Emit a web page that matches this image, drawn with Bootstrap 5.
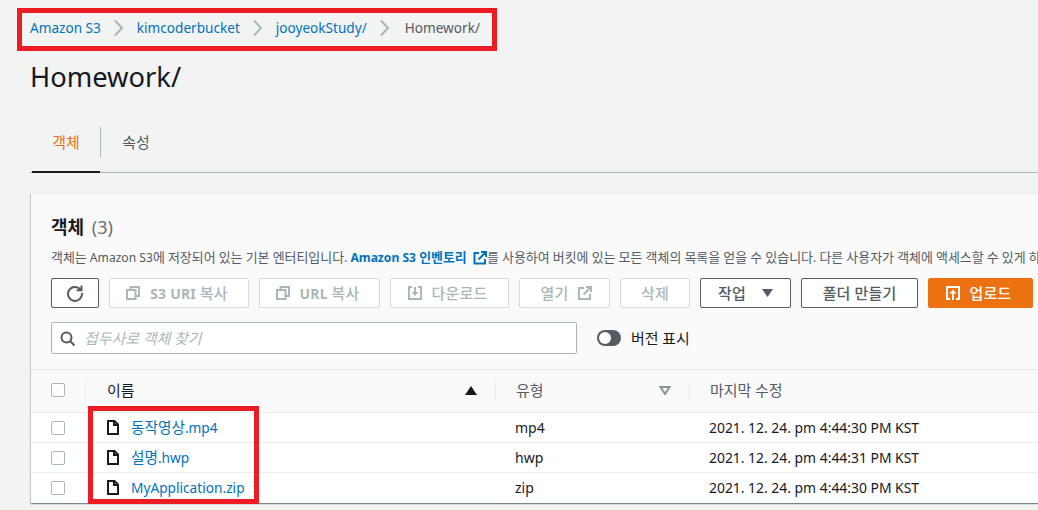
<!DOCTYPE html>
<html lang="ko">
<head>
  <meta charset="UTF-8" />
  <meta name="viewport" content="width=device-width, initial-scale=1" />
  <title>Homework/</title>
  <link href="https://cdn.jsdelivr.net/npm/bootstrap@5.3.0/dist/css/bootstrap.min.css" rel="stylesheet" />
  <style>
    html, body { height: 510px; overflow: hidden; }
    body {
      background: #f2f3f3;
      color: #16191f;
      font-family: "Noto Sans", "Noto Sans CJK KR", sans-serif;
      font-size: 14px;
      position: relative;
    }
    a { color: #0073bb; text-decoration: none; }
    .page-wrap { width: 1120px; padding: 0 0 0 30px; }
    /* hangul sits a bit larger than the latin text in this screen */
    .ko-run { font-size: 1.07em; }

    .crumb-bar { height: 55px; padding-top: 18px; line-height: 20px; font-size: 13.6px; gap: 12px; }
    .crumb-bar .crumb-now { color: #545b64; margin-left: 2px; }
    .crumb-sep { width: 12px; height: 16px; margin-top: 2px; }

    .page-title { font-size: 27.3px; font-weight: 400; line-height: 44px; margin: 0; height: 72px; }

    .tab-bar { height: 46px; width: 1100px; border-bottom: 1px solid #aab7b8; }
    .tab-item {
      width: 70px; height: 46px; font-size: 14px; line-height: 30px; text-align: center;
      color: #545b64;
    }
    .tab-item.tab-on { color: #ec7211; width: 68px; border-bottom: 2px solid #16191f; margin-left: 2px; }
    .tab-split { width: 1px; height: 30px; background: #aab7b8; }

    .obj-card {
      margin-top: 20px; margin-left: 1px; width: 1090px; height: 310px;
      background: #fafafa; box-shadow: 0 1px 1px 0 rgba(0,28,36,.3), 1px 1px 1px 0 rgba(0,28,36,.15), -1px 1px 1px 0 rgba(0,28,36,.15);
      border-top: 1px solid #eaeded;
    }
    .obj-head { padding: 20px 0 0 20px; }
    .obj-title { font-size: 18px; font-weight: 700; line-height: 26px; margin: 0; word-spacing: 3px; }
    .obj-title .ko-run { font-size: 1em; }
    .obj-title span.cnt { font-weight: 400; color: #687078; }
    .obj-desc { font-size: 12.1px; line-height: 16px; color: #545b64; white-space: nowrap; margin: 9px 0 0; height: 16px; }
    .obj-desc a { font-weight: 700; }
    .obj-desc svg { vertical-align: -3px; margin: 0 0 0 3px; }

    .tool-row { margin-top: 13px; gap: 10px; height: 30px; }
    .tool-btn {
      height: 30px; padding: 0; font-size: 14px; font-weight: 700; line-height: 28px; border-radius: 2px;
      background: #fff; color: #545b64; border: 1px solid #545b64;
      display: flex; align-items: center; justify-content: center; gap: 10px; white-space: nowrap; letter-spacing: .2px;
    }
    .tool-btn .ko-run { font-weight: 500; }
    .tool-btn.btn-off { border-color: #d5dbdb; color: #aab7b8; }
    .tool-btn.btn-go { background: #ec7211; border-color: #ec7211; color: #fff; }

    .find-row { margin-top: 14px; height: 32px; }
    .find-box {
      width: 526px; height: 32px; background: #fff; border: 1px solid #aab7b8; border-radius: 2px;
      display: flex; align-items: center; padding-left: 8px; gap: 9px;
      color: #aab7b8; font-style: italic; font-size: 14px;
    }
    .ver-switch { width: 24px; height: 16px; border-radius: 8px; background: #545b64; margin-left: 20px; padding: 2px; }
    .ver-switch i { display: block; width: 12px; height: 12px; background: #fff; border-radius: 50%; }
    .ver-label { margin-left: 10px; font-size: 14px; }

    .obj-table { margin: 15px 0 0; table-layout: fixed; width: 1089px; border-top: 1px solid #eaeded; border-collapse: collapse; }
    .obj-table th {
      height: 43px; padding: 0 0 2px; background: #fafafa; font-size: 14px; font-weight: 400;
      border-bottom: 1px solid #eaeded; vertical-align: middle; color: #545b64;
    }
    .obj-table td {
      height: 30px; padding: 0; background: #fff; border-bottom: 1px solid #eaeded; font-size: 14px;
      vertical-align: middle; color: #16191f; line-height: 20px;
    }
    .obj-table tr:last-child td { border-bottom: 0; height: 30px; }
    .head-cell { height: 20px; padding-left: 20px; padding-right: 18px; border-left: 1px solid #eaeded; display: flex; align-items: center; justify-content: space-between; }
    .head-name { color: #16191f; padding-left: 21px; }
    .tick { display: block; width: 14px; height: 14px; margin-left: 20px; border: 1px solid #aab7b8; border-radius: 2px; background: #fff; }
    .name-cell { display: flex; align-items: center; gap: 12px; padding-left: 22px; font-size: 13.7px; }
    .plain-cell { padding-left: 20px; }
    .date-cell { padding-left: 20px; font-size: 13.9px; }

    .red-mark { position: absolute; border: 5px solid #ed1c24; pointer-events: none; }
    .red-top { left: 17px; top: 8px; width: 480px; height: 43px; }
    .red-files { left: 88px; top: 406px; width: 171px; height: 98px; }
  </style>
</head>
<body>
  <div class="page-wrap">
    <nav class="crumb-bar d-flex align-items-start">
      <a href="#">Amazon S3</a>
      <svg class="crumb-sep" viewBox="0 0 12 16"><path d="M2 0.500l7 7.500-7 7.500" fill="none" stroke="#aab7b8" stroke-width="2"/></svg>
      <a href="#">kimcoderbucket</a>
      <svg class="crumb-sep" viewBox="0 0 12 16"><path d="M2 0.500l7 7.500-7 7.500" fill="none" stroke="#aab7b8" stroke-width="2"/></svg>
      <a href="#">jooyeokStudy/</a>
      <svg class="crumb-sep" viewBox="0 0 12 16"><path d="M2 0.500l7 7.500-7 7.500" fill="none" stroke="#aab7b8" stroke-width="2"/></svg>
      <span class="crumb-now">Homework/</span>
    </nav>

    <h1 class="page-title">Homework/</h1>

    <div class="tab-bar d-flex align-items-start">
      <div class="tab-item tab-on"><span>객체</span></div>
      <div class="tab-split"></div>
      <div class="tab-item"><span>속성</span></div>
    </div>

    <div class="obj-card">
      <div class="obj-head">
        <h2 class="obj-title">객체 <span class="cnt">(3)</span></h2>
        <p class="obj-desc">객체는 Amazon S3에 저장되어 있는 기본 엔터티입니다. <a href="#">Amazon S3 인벤토리 <svg width="14" height="14" viewBox="0 0 14 14"><path d="M6 2H1.500v10.500H12V8" fill="none" stroke="#0073bb" stroke-width="2"/><path d="M5.500 8.500L12 2M8 1h5v5" fill="none" stroke="#0073bb" stroke-width="2"/></svg></a>를 사용하여 버킷에 있는 모든 객체의 목록을 얻을 수 있습니다. 다른 사용자가 객체에 액세스할 수 있게 하</p>

        <div class="tool-row d-flex">
          <button class="tool-btn" style="width:48px" aria-label="새로 고침">
            <svg width="18" height="18" viewBox="0 0 18 18"><path d="M14.500 5.500A7 7 0 1 0 16 9" fill="none" stroke="#545b64" stroke-width="2"/><path d="M15.500 1.500v4.800h-4.800" fill="none" stroke="#545b64" stroke-width="2"/></svg>
          </button>
          <button class="tool-btn btn-off pe-1" style="width:140px">
            <svg width="14" height="14" viewBox="0 0 14 14"><path d="M4.500 4V1h8.500v9h-3M1 4h8.500v9H1z" fill="none" stroke="#aab7b8" stroke-width="2"/></svg><span>S3 URI 복사</span>
          </button>
          <button class="tool-btn btn-off pe-1" style="width:121px">
            <svg width="14" height="14" viewBox="0 0 14 14"><path d="M4.500 4V1h8.500v9h-3M1 4h8.500v9H1z" fill="none" stroke="#aab7b8" stroke-width="2"/></svg><span>URL 복사</span>
          </button>
          <button class="tool-btn btn-off pe-1" style="width:119px">
            <svg width="14" height="14" viewBox="0 0 14 14"><path d="M4 1H1v12h12V1h-3" fill="none" stroke="#aab7b8" stroke-width="2"/><path d="M7 1v7" stroke="#aab7b8" stroke-width="2"/><path d="M3.500 6L7 10l3.500-4z" fill="#aab7b8"/></svg><span>다운로드</span>
          </button>
          <button class="tool-btn btn-off ps-1" style="width:91px"><span>열기</span>
            <svg width="14" height="14" viewBox="0 0 14 14"><path d="M6 2H1v11h11V8" fill="none" stroke="#aab7b8" stroke-width="2"/><path d="M5.500 8.500L12 2M8 1h5v5" fill="none" stroke="#aab7b8" stroke-width="2"/></svg>
          </button>
          <button class="tool-btn btn-off" style="width:70px">삭제</button>
          <button class="tool-btn gap-3" style="width:91px"><span>작업</span>
            <svg width="11" height="8" viewBox="0 0 11 8"><path d="M0 0h11L5.500 8z" fill="#545b64"/></svg>
          </button>
          <button class="tool-btn" style="width:117px">폴더 만들기</button>
          <button class="tool-btn btn-go pe-1" style="width:105px">
            <svg width="14" height="14" viewBox="0 0 14 14"><path d="M4 13H1V1h12v12h-3" fill="none" stroke="#fff" stroke-width="2"/><path d="M7 14V6" stroke="#fff" stroke-width="2"/><path d="M3.500 7.500L7 3.500l3.500 4z" fill="#fff"/></svg><span>업로드</span>
          </button>
        </div>

        <div class="find-row d-flex align-items-center">
          <div class="find-box">
            <svg width="15" height="15" viewBox="0 0 15 15"><circle cx="6.500" cy="6.500" r="5" fill="none" stroke="#545b64" stroke-width="2"/><path d="M10 10l4.500 4.500" stroke="#545b64" stroke-width="2"/></svg>
            <span>접두사로 객체 찾기</span>
          </div>
          <div class="ver-switch"><i></i></div>
          <span class="ver-label">버전 표시</span>
        </div>
      </div>

      <table class="obj-table">
        <colgroup><col style="width:54px" /><col style="width:410px" /><col style="width:194px" /><col /></colgroup>
        <thead>
          <tr>
            <th><span class="tick"></span></th>
            <th><div class="head-cell head-name"><span>이름</span><svg width="12" height="9" viewBox="0 0 12 9"><path d="M6 0l6 9H0z" fill="#16191f"/></svg></div></th>
            <th><div class="head-cell"><span>유형</span><svg width="12" height="9" viewBox="0 0 12 9"><path d="M1.500 1h9L6 8z" fill="none" stroke="#879596" stroke-width="2"/></svg></div></th>
            <th><div class="head-cell"><span>마지막 수정</span></div></th>
          </tr>
        </thead>
        <tbody id="fileRows"></tbody>
      </table>
    </div>
  </div>

  <div class="red-mark red-top"></div>
  <div class="red-mark red-files"></div>

  <script src="https://cdn.jsdelivr.net/npm/bootstrap@5.3.0/dist/js/bootstrap.bundle.min.js"></script>
  <script>
    const files = [
      { name: "동작영상.mp4", type: "mp4", date: "2021. 12. 24. pm 4:44:30 PM KST" },
      { name: "설명.hwp", type: "hwp", date: "2021. 12. 24. pm 4:44:31 PM KST" },
      { name: "MyApplication.zip", type: "zip", date: "2021. 12. 24. pm 4:44:30 PM KST" }
    ];
    const fileIcon = '<svg width="12" height="15" viewBox="0 0 12 15"><path d="M1 1h6.500L11 4.500V14H1z" fill="none" stroke="#16191f" stroke-width="2"/><path d="M7 1v4h4" fill="none" stroke="#16191f" stroke-width="2"/></svg>';
    document.getElementById("fileRows").innerHTML = files.map(f => `
      <tr>
        <td><span class="tick"></span></td>
        <td><div class="name-cell">${fileIcon}<a href="#">${f.name}</a></div></td>
        <td><div class="plain-cell">${f.type}</div></td>
        <td><div class="date-cell">${f.date}</div></td>
      </tr>`).join("");

    // wrap hangul runs so they can be sized apart from latin
    const walker = document.createTreeWalker(document.querySelector(".page-wrap"), NodeFilter.SHOW_TEXT);
    const textNodes = [];
    while (walker.nextNode()) {
      if (/[가-힣]/.test(walker.currentNode.nodeValue)) textNodes.push(walker.currentNode);
    }
    textNodes.forEach(node => {
      const holder = document.createElement("span");
      holder.innerHTML = node.nodeValue.replace(/[가-힣]+/g, m => `<span class="ko-run">${m}</span>`);
      node.replaceWith(holder);
    });
  </script>
</body>
</html>
